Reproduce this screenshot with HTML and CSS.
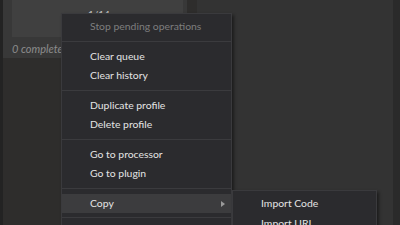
FILE: index.html
```html
<!DOCTYPE html>
<html>
<head>
<meta charset="utf-8">
<link rel="stylesheet" href="styles.css">
</head>
<body>
<div class="app">
  <div class="edge"></div>
  <div class="sidebar">
    <div class="card">
      <div class="thumb"><span class="thumb-label">1/14</span></div>
      <div class="caption">0 completed</div>
    </div>
  </div>
  <div class="main"></div>
  <div class="edge-right"></div>
</div>

<div class="menu">
  <div class="item disabled">Stop pending operations</div>
  <div class="sep"></div>
  <div class="item">Clear queue</div>
  <div class="item">Clear history</div>
  <div class="sep"></div>
  <div class="item">Duplicate profile</div>
  <div class="item">Delete profile</div>
  <div class="sep"></div>
  <div class="item">Go to processor</div>
  <div class="item">Go to plugin</div>
  <div class="sep"></div>
  <div class="item active">Copy<span class="arrow"></span></div>
  <div class="sep"></div>
</div>

<div class="submenu">
  <div class="item">Import Code</div>
  <div class="item">Import URL</div>
</div>
</body>
</html>
```

FILE: styles.css
```css
html, body {
  margin: 0;
  padding: 0;
}
body {
  width: 400px;
  height: 225px;
  overflow: hidden;
  background: #2a2a2a;
  font-family: Lato, "Noto Sans", sans-serif;
  position: relative;
}
.app {
  display: flex;
  height: 225px;
}
.edge {
  width: 3px;
  background: #232323;
}
.sidebar {
  width: 194px;
  background: #2e2d2c;
}
.card {
  width: 184px;
  height: 58px;
  background: #383838;
  box-sizing: border-box;
  padding: 0 4px 0 9px;
}
.thumb {
  height: 37px;
  background: #404040;
  box-sizing: border-box;
  padding: 8px 0 0 76px;
}
.thumb-label {
  font-size: 10px;
  color: #c4c4c4;
  line-height: 12px;
  display: block;
}
.caption {
  font-size: 11px;
  font-style: italic;
  color: #8c8c8c;
  padding: 5px 0 0 0;
  line-height: 14px;
}
.main {
  flex: 1;
  background: #333333;
}
.edge-right {
  width: 7px;
  background: #2a2a2a;
}
.menu, .submenu {
  position: absolute;
  background: #2b2b2e;
  border: 1px solid #3a3a3d;
  box-shadow: 2px 2px 3px rgba(0, 0, 0, 0.45);
  padding-top: 3px;
  box-sizing: border-box;
}
.menu {
  left: 61px;
  top: 13px;
  width: 171px;
  height: 240px;
}
.submenu {
  left: 232px;
  top: 190px;
  width: 145px;
  height: 60px;
}
.item {
  height: 19.5px;
  line-height: 19.5px;
  font-size: 10.4px;
  color: #e4e4e4;
  padding-left: 28px;
  position: relative;
  white-space: nowrap;
}
.item.disabled {
  color: #7e7e7e;
}
.item.active {
  background: #3c3c3e;
}
.sep {
  height: 1px;
  background: #3b3b3e;
  margin: 4px 0 5px 0;
}
.arrow {
  position: absolute;
  right: 6px;
  top: 7px;
  width: 0;
  height: 0;
  border-top: 3px solid transparent;
  border-bottom: 3px solid transparent;
  border-left: 4px solid #9a9a9a;
}
```
